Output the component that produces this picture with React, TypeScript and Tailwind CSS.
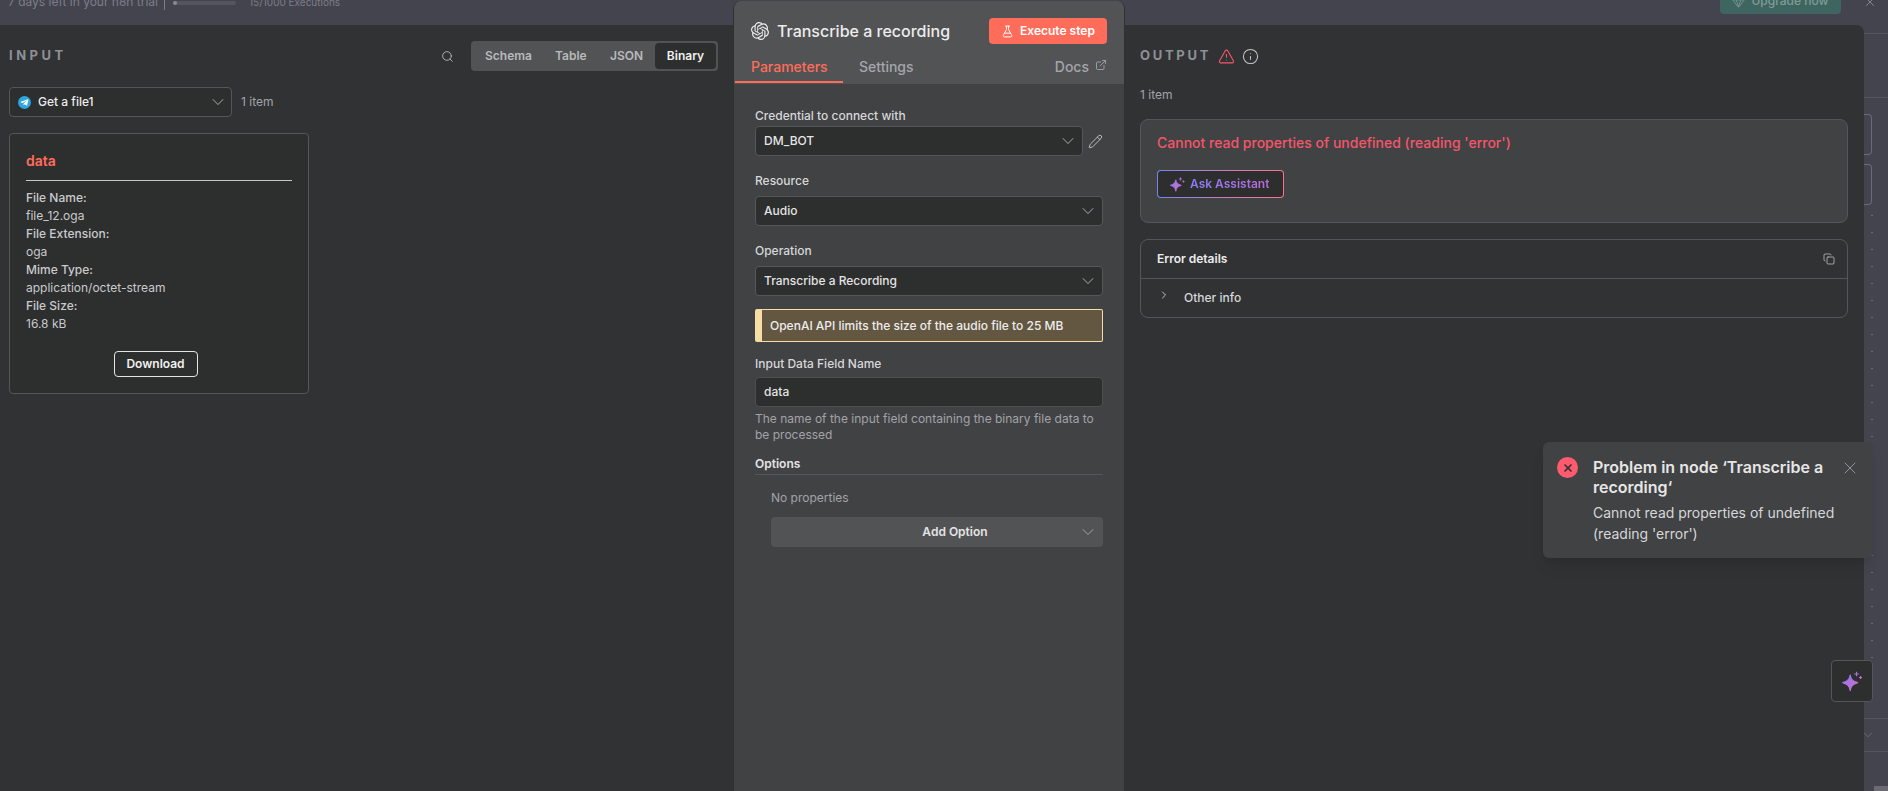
import { ChevronDown, ChevronRight, Copy, ExternalLink, FlaskConical, Gem, Info, Pencil, Search, TriangleAlert, X } from 'lucide-react'
import { FaTelegramPlane } from 'react-icons/fa'
import { SiOpenai } from 'react-icons/si'

function Sparkle({ className }: { className?: string }) {
  return (
    <svg viewBox="0 0 20 20" className={className} fill="none">
      <defs>
        <linearGradient id="spark" x1="0" y1="0" x2="1" y2="1">
          <stop offset="0%" stopColor="#8b7cf6" />
          <stop offset="100%" stopColor="#d46bc4" />
        </linearGradient>
      </defs>
      <path d="M8 4.5 C8.7 8.2 10.2 9.7 14.5 11 C10.2 12.3 8.7 13.8 8 18 C7.3 13.8 5.8 12.3 1.5 11 C5.8 9.7 7.3 8.2 8 4.5 Z" fill="url(#spark)" stroke="url(#spark)" strokeWidth="1" strokeLinejoin="round" />
      <path d="M13.5 1.5 V5.5 M11.5 3.5 H15.5" stroke="#b06ee0" strokeWidth="1" />
      <path d="M17 5.2 V7.8 M15.7 6.5 H18.3" stroke="#d46bc4" strokeWidth="1" />
    </svg>
  )
}

function Select({ label, className }: { label: string; className?: string }) {
  return (
    <div className={`flex h-[30px] items-center justify-between rounded border border-[#55565a] bg-[#2d2e2e] pl-2 pr-[4px] text-[12px] font-medium text-[#e4e4e5] ${className ?? ''}`}>
      <span>{label}</span>
      <ChevronDown className="h-5 w-5 text-[#8f9095]" strokeWidth={1.25} />
    </div>
  )
}

function Meta({ label, value }: { label: string; value: string }) {
  return (
    <>
      <div className="font-medium">{label}</div>
      <div>{value}</div>
    </>
  )
}

const dots = Array.from({ length: 29 }, (_, i) => i)

export default function App() {
  return (
    <div className="relative flex h-[791px] w-[1888px] flex-col overflow-hidden bg-[#44444f] font-['Inter',sans-serif]">
      {/* dimmed top bar, only its lower edge is visible */}
      <div className="flex h-[25px] shrink-0 items-start overflow-hidden pl-[8px] text-[#7d7d88]">
        <div className="-mt-[7px] flex items-center">
          <span className="text-[12px] leading-[18px]">7 days left in your n8n trial</span>
          <span className="ml-[6px] h-[16px] w-px bg-[#7d7d88]" />
          <span className="ml-[8px] mt-[2px] h-[4px] w-[63px] rounded bg-[#55555f]">
            <span className="block h-[4px] w-[4px] rounded-full bg-[#8a8a94]" />
          </span>
          <span className="ml-[13px] text-[10px]">15/1000 Executions</span>
        </div>
        <div className="-mt-[12px] ml-auto mr-[22px] flex h-[26px] w-[121px] items-center justify-center gap-[6px] rounded bg-[#3f6560] text-[12px] font-medium text-[#7f9c97]">
          <Gem className="h-[13px] w-[13px]" strokeWidth={1.5} />
          Upgrade now
        </div>
        <X className="-mt-[5px] mr-[11px] h-[14px] w-[14px] text-[#8f8f99]" strokeWidth={1.5} />
      </div>

      <div className="flex min-h-0 flex-1">
        {/* Input */}
        <div className="w-[733px] shrink-0 bg-[#313234] pl-[9px] pr-[15px]">
          <div className="flex h-[30px] items-center mt-[16px]">
            <span className="text-[13px] font-bold tracking-[3.5px] text-[#8f9095]">INPUT</span>
            <Search className="ml-auto h-[13px] w-[13px] text-[#c4c5c8]" strokeWidth={1.5} />
            <div className="ml-[17px] flex h-[30px] w-[247px] items-center rounded bg-[#525355] p-[2px] text-[12px] font-semibold text-[#b9babc]">
              <span className="ml-[12px] w-[70px]">Schema</span>
              <span className="w-[55px]">Table</span>
              <span className="w-[45px]">JSON</span>
              <span className="flex h-[26px] flex-1 items-center justify-center rounded bg-[#2d2e2e] text-[#f0f0f0]">Binary</span>
            </div>
          </div>

          <div className="mt-[16px] flex items-center">
            <div className="flex h-[30px] w-[223px] items-center rounded border border-[#55565a] bg-[#2d2e2e] pl-[8px] pr-[3px] text-[12px] font-medium text-[#ececec]">
              <span className="flex h-[13px] w-[13px] items-center justify-center rounded-full bg-[#2ca5e0]">
                <FaTelegramPlane className="-ml-px h-[9px] w-[9px] text-white" />
              </span>
              <span className="ml-[7px]">Get a file1</span>
              <ChevronDown className="ml-auto h-5 w-5 text-[#8f9095]" strokeWidth={1.25} />
            </div>
            <span className="ml-[9px] text-[12px] text-[#a2a3a8]">1 item</span>
          </div>

          <div className="mt-[16px] h-[261px] w-[300px] rounded border border-[#55565a] bg-[#2d2e2e] pl-[16px] pr-[16px]">
            <div className="mt-[16px] text-[14px] font-semibold leading-[21px] text-[#ff6d5a]">data</div>
            <div className="mt-[9px] h-px bg-[#c4c7d0]" />
            <div className="mt-[8px] text-[12px] leading-[18px] text-[#c9cacd]">
              <Meta label="File Name:" value="file_12.oga" />
              <Meta label="File Extension:" value="oga" />
              <Meta label="Mime Type:" value="application/octet-stream" />
              <Meta label="File Size:" value="16.8 kB" />
            </div>
            <div className="mt-[18px] flex justify-center">
              <div className="-ml-[7px] flex h-[26px] w-[84px] items-center justify-center rounded border border-[#e4e4e5] text-[12px] font-semibold text-[#f0f0f0]">Download</div>
            </div>
          </div>
        </div>

        {/* Node settings */}
        <div className="z-10 -mt-[24px] w-[392px] shrink-0 overflow-hidden rounded-t-lg border-x border-[#2f3032] bg-[#414244]">
          <div className="h-[83px] bg-[#525355] pl-[17px] pr-[17px]">
            <div className="flex items-center pt-[17px]">
              <SiOpenai className="h-[18px] w-[18px] text-[#ececec]" />
              <span className="ml-[8px] text-[16px] font-medium text-[#ececec]">Transcribe a recording</span>
              <div className="ml-auto flex h-[26px] w-[118px] items-center justify-center gap-[6px] rounded bg-[#ff6d5a] text-[12px] font-semibold text-white">
                <FlaskConical className="h-[13px] w-[13px]" strokeWidth={1.75} />
                Execute step
              </div>
            </div>
            <div className="-ml-[16px] mt-[12px] flex h-[27px] items-start text-[14px] font-medium text-[#a5a6ab]">
              <span className="h-[27px] w-[108px] border-b-2 border-[#ff6d5a] pl-[16px] text-[#ff6d5a]">Parameters</span>
              <span className="ml-[16px]">Settings</span>
              <span className="ml-auto flex items-center gap-[6px]">
                Docs
                <ExternalLink className="-mt-1 h-[12px] w-[12px]" strokeWidth={1.75} />
              </span>
            </div>
          </div>

          <div className="pl-[21px] pr-[21px] text-[12px] font-medium text-[#d6d7d9]">
            <div className="mt-[23px] leading-[18px]">Credential to connect with</div>
            <div className="mt-[1px] flex items-center">
              <Select label="DM_BOT" className="w-[328px]" />
              <Pencil className="ml-[5px] h-[15px] w-[15px] text-[#c4c5c8]" strokeWidth={1.5} />
            </div>
            <div className="mt-[16px] leading-[18px]">Resource</div>
            <Select label="Audio" className="mt-[6px]" />
            <div className="mt-[16px] leading-[18px]">Operation</div>
            <Select label="Transcribe a Recording" className="mt-[6px]" />

            <div className="mt-[13px] flex h-[33px] items-center rounded-[2px] border border-[#f6dca5] border-l-[7px] bg-[#645742] pl-[8px] font-medium text-[#ededed]">
              OpenAI API limits the size of the audio file to 25 MB
            </div>

            <div className="mt-[13px] leading-[18px]">Input Data Field Name</div>
            <div className="mt-[4px] flex h-[30px] items-center rounded border border-[#4d4e50] bg-[#2d2e2e] pl-2 text-[12px] text-[#e4e4e5]">data</div>
            <div className="mt-[4px] text-[12px] font-normal leading-[16px] text-[#a2a3a8]">
              The name of the input field containing the binary file data to be processed
            </div>
            <div className="mt-[12px] border-b border-[#55565a] pb-[1px] font-semibold leading-[18px] text-[#e4e4e5]">Options</div>
            <div className="ml-[16px]">
              <div className="mt-[14px] font-normal leading-[18px] text-[#a2a3a8]">No properties</div>
              <div className="relative mt-[10px] flex h-[30px] items-center justify-center rounded bg-[#525355] pl-[36px] text-[12px] font-semibold text-[#e4e4e5]">
                Add Option
                <ChevronDown className="absolute right-[5px] h-5 w-5 text-[#8f9095]" strokeWidth={1.25} />
              </div>
            </div>
          </div>
        </div>

        {/* Output */}
        <div className="w-[739px] shrink-0 rounded-tr-lg bg-[#313234] pl-[15px] pr-[16px]">
          <div className="mt-[16px] flex h-[30px] items-center">
            <span className="text-[13px] font-bold tracking-[2.7px] text-[#8f9095]">OUTPUT</span>
            <TriangleAlert className="ml-[7px] h-[17px] w-[17px] text-[#f45b69]" strokeWidth={1.5} />
            <Info className="ml-[7px] h-[17px] w-[17px] text-[#c4c5c8]" strokeWidth={1.5} />
          </div>
          <div className="mt-[15px] text-[12px] leading-[18px] text-[#a2a3a8]">1 item</div>

          <div className="mt-[15px] h-[104px] rounded-lg border border-[#55565a] bg-[#414244] pl-[16px]">
            <div className="mt-[12px] text-[14px] font-medium leading-[21px] text-[#f4566a]">Cannot read properties of undefined (reading 'error')</div>
            <div className="mt-[17px] h-[28px] w-[127px] rounded bg-linear-to-r from-[#7b80f5] to-[#ff6d8a] p-px">
              <div className="flex h-full items-center rounded-[3px] bg-[#2d2e2e] pl-[11px]">
                <Sparkle className="h-[17px] w-[17px]" />
                <span className="ml-[4px] bg-linear-to-r from-[#8b7cf6] to-[#b76ad8] bg-clip-text text-[12px] font-semibold text-transparent">Ask Assistant</span>
              </div>
            </div>
          </div>

          <div className="mt-[16px] h-[79px] rounded-lg border border-[#55565a]">
            <div className="flex h-[39px] items-center border-b border-[#55565a] pl-[16px] pr-[12px] text-[12px] font-semibold text-[#ececec]">
              Error details
              <Copy className="ml-auto h-[12px] w-[12px] text-[#c4c5c8]" strokeWidth={1.5} />
            </div>
            <div className="flex h-[38px] items-center pl-[17px] text-[12px] font-medium text-[#d6d7d9]">
              <ChevronRight className="-mt-[6px] h-[12px] w-[12px]" strokeWidth={1.75} />
              <span className="ml-[14px]">Other info</span>
            </div>
          </div>
        </div>

        {/* What shows of the canvas behind the modal */}
        <div className="flex w-[24px] shrink-0 flex-col">
          <div className="mt-[8px] border-t border-[#55555f]" />
          <div className="mt-[63px] border-t border-[#55555f]" />
          <div className="mt-[16px] h-[41px] w-[8px] rounded-r border-y border-r border-[#6a6a78]" />
          <div className="mt-[9px] h-[41px] w-[8px] rounded-r border-y border-r border-[#6a6a78]" />
          <div className="mt-[10px] flex flex-col gap-[16px] pl-[7px]">
            {dots.map(d => (
              <span key={d} className="h-px w-[2px] bg-[#6a6a78]" />
            ))}
          </div>
          <div className="mt-[26px] border-t border-[#55555f]" />
          <ChevronDown className="mt-[9px] -ml-[3px] h-[14px] w-[14px] text-[#6f6f7a]" strokeWidth={1.5} />
          <div className="mt-[9px] border-t border-[#55555f]" />
          <div className="ml-[10px] mt-[34px] flex-1 bg-[#6a6a70]" />
        </div>
      </div>

      {/* Toast */}
      <div className="absolute left-[1543px] top-[442px] flex h-[116px] w-[330px] rounded-md bg-[#414244] pl-[14px] pr-[24px] pt-[15px] shadow-lg">
        <div className="flex h-[21px] w-[21px] shrink-0 items-center justify-center rounded-full bg-[#ff5a6e]">
          <X className="h-[12px] w-[12px] text-[#313234]" strokeWidth={3.5} />
        </div>
        <div className="ml-[15px] flex-1">
          <div className="text-[16px] font-semibold leading-[20px] text-[#e6e6e6]">Problem in node ‘Transcribe a recording‘</div>
          <div className="mt-[5px] text-[14px] leading-[21px] text-[#d6d7d9]">Cannot read properties of undefined (reading 'error')</div>
        </div>
        <X className="absolute right-[13px] top-[16px] h-[20px] w-[20px] text-[#a2a3a8]" strokeWidth={1} />
      </div>

      {/* Assistant button */}
      <div className="absolute left-[1831px] top-[660px] flex h-[42px] w-[42px] items-center justify-center rounded border border-[#55565a] bg-[#2d2e2e]">
        <Sparkle className="h-[23px] w-[23px]" />
      </div>
    </div>
  )
}
